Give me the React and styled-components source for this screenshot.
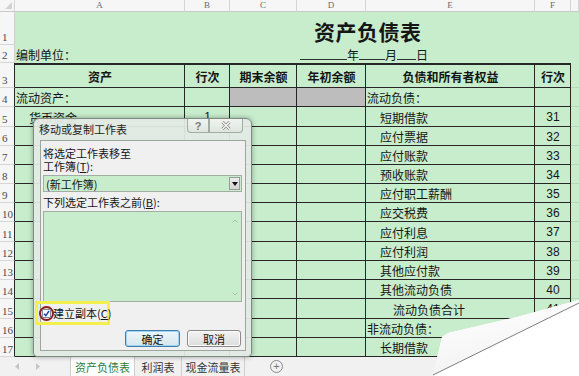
import styled, { createGlobalStyle } from 'styled-components'

const GREEN = '#c7edcc'
const LINE = '#262626'
const COLS = '15px 170px 45px 67px 69px 169px 36px 1fr'

const GlobalStyle = createGlobalStyle`
    html, body {
        margin: 0;
        padding: 0;
        background: #fff;
    }
    body {
        font-family: "Noto Sans CJK SC", "Noto Sans", sans-serif;
        color: #151515;
    }
`

const Screen = styled.div`
    position: relative;
    width: 579px;
    height: 376px;
    overflow: hidden;
    background: ${GREEN};
    display: flex;
    flex-direction: column;
`

const Row = styled.div`
    display: grid;
    grid-template-columns: ${COLS};
    height: ${p => p.$h}px;
    flex-shrink: 0;
`

const ColHead = styled.div`
    position: relative;
    background: #f6f6f6;
    border-right: 1px solid #d6d6d6;
    border-bottom: 1px solid #c9c9c9;
    color: #6a6a6a;
    font-family: "Liberation Serif", serif;
    font-size: 9px;
    display: flex;
    align-items: center;
    justify-content: center;
    line-height: 1;
`

const Corner = styled(ColHead)`
    &::after {
        content: '';
        position: absolute;
        right: 2px;
        bottom: 2px;
        border-left: 7px solid transparent;
        border-bottom: 7px solid #d2d2d2;
    }
`

const RowNum = styled.div`
    background: #f6f6f6;
    color: #4a4a4a;
    font-family: "Liberation Serif", serif;
    font-size: 11px;
    display: flex;
    align-items: flex-end;
    padding: 0 0 1px 2px;
    border-bottom: 1px solid #d6d6d6;
    border-right: 1px solid ${p => (p.$table ? LINE : '#cfcfcf')};
    line-height: 1;
`

const Plain = styled.div`
    grid-column: ${p => p.$span || 'auto'};
    display: flex;
    align-items: flex-end;
    padding: 0 0 ${p => p.$pb || 2}px ${p => p.$pl || 1}px;
    font-size: 12px;
    line-height: 1.2;
    white-space: nowrap;
`

const Title = styled.div`
    font-size: 21px;
    font-weight: 700;
    letter-spacing: 0.5px;
    line-height: 1;
`

const DateLine = styled.div`
    display: flex;
    align-items: flex-end;
    font-size: 12px;
`

const Blank = styled.span`
    display: inline-block;
    width: ${p => p.$w}px;
    height: 11px;
    border-bottom: 1px solid #333;
    margin-bottom: 2px;
`

const Cell = styled.div`
    display: flex;
    align-items: center;
    justify-content: ${p => (p.$center ? 'center' : 'flex-start')};
    padding-left: ${p => (p.$indent || 0) * 13 + 1}px;
    padding-top: 1px;
    background: ${p => (p.$shade ? '#bdbdbd' : 'transparent')};
    border-right: 1px solid ${LINE};
    border-bottom: 1px solid ${LINE};
    border-top: ${p => (p.$top ? `2px solid ${LINE}` : 'none')};
    font-size: 12px;
    font-weight: ${p => (p.$bold ? 700 : 400)};
    font-family: ${p => (p.$num ? '"Liberation Sans", sans-serif' : 'inherit')};
    white-space: nowrap;
    overflow: hidden;
`

const Outside = styled.div`
    border-bottom: 1px solid #b3dab8;
`

const TabBar = styled.div`
    height: 19px;
    background: #f1f1f1;
    display: flex;
    align-items: stretch;
    flex-shrink: 0;
`

const Nav = styled.div`
    width: 70px;
    display: flex;
    align-items: center;
    gap: 15px;
    padding-left: 15px;
    box-sizing: border-box;
`

const Tab = styled.div`
    width: ${p => p.$w}px;
    display: flex;
    align-items: center;
    justify-content: center;
    font-size: 11px;
    color: ${p => (p.$active ? '#2e7d3c' : '#333')};
    background: ${p => (p.$active ? '#fff' : 'transparent')};
    border-right: 1px solid #cdcdcd;
    border-left: ${p => (p.$active ? '1px solid #cdcdcd' : 'none')};
    box-sizing: border-box;
`

const AddSheet = styled.div`
    margin: 0 0 0 25px;
    align-self: center;
    width: 11px;
    height: 11px;
    border: 1px solid #8a8a8a;
    border-radius: 50%;
    color: #777;
    font-size: 11px;
    line-height: 10px;
    text-align: center;
    font-family: "Liberation Sans", sans-serif;
`

/* dialog */
const Dialog = styled.div`
    position: absolute;
    left: 33px;
    top: 118px;
    width: 219px;
    height: 239px;
    box-sizing: border-box;
    border: 1px solid #7d8b80;
    border-radius: 6px 6px 4px 4px;
    background: rgba(226, 234, 228, 0.94);
    box-shadow: 0 0 5px rgba(0, 0, 0, 0.35);
    display: flex;
    flex-direction: column;
    padding: 0 5px 5px 6px;
`

const TitleBar = styled.div`
    height: 21px;
    display: flex;
    align-items: flex-start;
    flex-shrink: 0;
`

const DialogTitle = styled.div`
    font-size: 11px;
    margin: 4px 0 0 -1px;
    color: #1c1c1c;
    line-height: 13px;
    white-space: nowrap;
`

const CaptionButton = styled.div`
    width: ${p => p.$w}px;
    height: 14px;
    margin-left: ${p => p.$ml || '0'};
    margin-right: ${p => p.$mr || 0}px;
    flex-shrink: 0;
    box-sizing: border-box;
    border: 1px solid #a2aca4;
    border-top: none;
    border-radius: ${p => p.$r};
    background: linear-gradient(#f1f4f1, #dde6de);
    display: flex;
    align-items: center;
    justify-content: center;
    color: #7a7a7a;
    font-family: "Liberation Sans", sans-serif;
    font-size: 11px;
    font-weight: 700;
`

const Client = styled.div`
    flex: 1;
    background: #f0f0f0;
    border: 1px solid #9ca69d;
    display: flex;
    flex-direction: column;
    padding: 4px 3px 0 2px;
    font-size: 11px;
`

const Label = styled.div`
    line-height: 12px;
    height: 12px;
    margin-top: ${p => p.$mt || 0}px;
    white-space: nowrap;
`

const Key = styled.span`
    text-decoration: underline;
`

const Combo = styled.div`
    margin-top: 3px;
    height: 17px;
    box-sizing: border-box;
    border: 1px solid #a3ada4;
    background: ${GREEN};
    display: flex;
    align-items: center;
    justify-content: space-between;
    padding: 0 1px 0 2px;
`

const DropButton = styled.div`
    width: 11px;
    height: 13px;
    background: linear-gradient(#ececec, #d3d3d3);
    border: 1px solid #9a9a9a;
    box-sizing: border-box;
    display: flex;
    align-items: center;
    justify-content: center;
`

const ListBox = styled.div`
    margin-top: 3px;
    height: 91px;
    box-sizing: border-box;
    border: 1px solid #a3ada4;
    background: ${GREEN};
    display: flex;
    justify-content: flex-end;
`

const Scroll = styled.div`
    width: 12px;
    display: flex;
    flex-direction: column;
    justify-content: space-between;
    align-items: center;
    padding: 7px 0 5px;
`

const Highlight = styled.div`
    margin: -1px 0 0 -8px;
    width: 75px;
    height: 24px;
    box-sizing: border-box;
    border: 3px solid #f3f04e;
    display: flex;
    align-items: center;
    padding-left: 1px;
`

const Ring = styled.div`
    width: 15px;
    height: 15px;
    box-sizing: border-box;
    border: 2px solid #8e1b1b;
    border-radius: 50%;
    display: flex;
    align-items: center;
    justify-content: center;
    flex-shrink: 0;
`

const Box = styled.div`
    width: 9px;
    height: 9px;
    box-sizing: border-box;
    border: 1px solid #7f8a9a;
    background: #fff;
    display: flex;
    align-items: center;
    justify-content: center;
`

const CheckText = styled.div`
    margin-left: -1px;
    font-size: 11px;
    white-space: nowrap;
`

const Buttons = styled.div`
    margin-top: 5px;
    display: flex;
    justify-content: flex-end;
    gap: 7px;
    padding-right: 1px;
`

const Button = styled.div`
    width: ${p => p.$w}px;
    height: 17px;
    box-sizing: border-box;
    border: 1px solid ${p => (p.$primary ? '#3c7fb1' : '#8a8a8a')};
    border-radius: 3px;
    background: ${p =>
        p.$primary
            ? 'linear-gradient(#eef5f9, #d6e6ef)'
            : 'linear-gradient(#f3f3f3, #dcdcdc)'};
    box-shadow: ${p => (p.$primary ? 'inset 0 0 0 1px #9fd3f0' : 'inset 0 0 0 1px #fbfbfb')};
    display: flex;
    align-items: center;
    justify-content: center;
    font-size: 11px;
`

const Curl = styled.svg`
    position: absolute;
    right: 0;
    bottom: 0;
`

const rows = [
    { n: 4, h: 19, a: '流动资产：', shade: true, e: '流动负债：' },
    { n: 5, h: 20, a: '货币资金', ai: 1, b: '1', e: '短期借款', ei: 1, f: '31' },
    { n: 6, h: 19, e: '应付票据', ei: 1, f: '32' },
    { n: 7, h: 19, e: '应付账款', ei: 1, f: '33' },
    { n: 8, h: 19, e: '预收账款', ei: 1, f: '34' },
    { n: 9, h: 19, e: '应付职工薪酬', ei: 1, f: '35' },
    { n: 10, h: 19, e: '应交税费', ei: 1, f: '36' },
    { n: 11, h: 20, e: '应付利息', ei: 1, f: '37' },
    { n: 12, h: 19, e: '应付利润', ei: 1, f: '38' },
    { n: 13, h: 19, e: '其他应付款', ei: 1, f: '39' },
    { n: 14, h: 19, e: '其他流动负债', ei: 1, f: '40' },
    { n: 15, h: 20, e: '流动负债合计', ei: 2, f: '41' },
    { n: 16, h: 19, e: '非流动负债：' },
    { n: 17, h: 19, e: '长期借款', ei: 1 },
]

const headers = ['资产', '行次', '期末余额', '年初余额', '负债和所有者权益', '行次']

const SheetRow = ({ r }) => (
    <Row $h={r.h}>
        <RowNum $table>{r.n}</RowNum>
        <Cell $indent={r.ai}>{r.a}</Cell>
        <Cell $center $num>{r.b}</Cell>
        <Cell $shade={r.shade} />
        <Cell $shade={r.shade} />
        <Cell $indent={r.ei}>{r.e}</Cell>
        <Cell $center $num>{r.f}</Cell>
        <Outside />
    </Row>
)

const App = () => {
    return (
        <>
            <GlobalStyle />
            <Screen>
                <Row $h={12}>
                    <Corner />
                    {['A', 'B', 'C', 'D', 'E', 'F', ''].map((c, i) => (
                        <ColHead key={i}>{c}</ColHead>
                    ))}
                </Row>
                <Row $h={33}>
                    <RowNum>1</RowNum>
                    <Plain $span="5 / 9" $pl={17} $pb={3}>
                        <Title>资产负债表</Title>
                    </Plain>
                </Row>
                <Row $h={18}>
                    <RowNum>2</RowNum>
                    <Plain $pb={1}>编制单位：</Plain>
                    <Plain $span="5 / 9" $pl={3} $pb={1}>
                        <DateLine>
                            <Blank $w={47} />年<Blank $w={26} />月<Blank $w={19} />日
                        </DateLine>
                    </Plain>
                </Row>
                <Row $h={25}>
                    <RowNum $table>3</RowNum>
                    {headers.map((h, i) => (
                        <Cell key={i} $center $bold $top>{h}</Cell>
                    ))}
                    <Outside />
                </Row>
                {rows.map(r => (
                    <SheetRow key={r.n} r={r} />
                ))}
                <TabBar>
                    <Nav>
                        <svg width="5" height="7" viewBox="0 0 5 7"><path d="M4 0 L0 3.5 L4 7 Z" fill="#c4c4c4" /></svg>
                        <svg width="5" height="7" viewBox="0 0 5 7"><path d="M1 0 L5 3.5 L1 7 Z" fill="#c4c4c4" /></svg>
                    </Nav>
                    <Tab $active $w={65}>资产负债表</Tab>
                    <Tab $w={47}>利润表</Tab>
                    <Tab $w={63}>现金流量表</Tab>
                    <AddSheet>+</AddSheet>
                </TabBar>

                <Dialog>
                    <TitleBar>
                        <DialogTitle>移动或复制工作表</DialogTitle>
                        <CaptionButton $w={22} $ml="auto" $r="0 0 0 4px">?</CaptionButton>
                        <CaptionButton $w={34} $mr={3} $r="0 0 4px 0">
                            <svg width="10" height="9" viewBox="0 0 10 9">
                                <path d="M1.5 1 L8.5 8 M8.5 1 L1.5 8" stroke="#8c8c8c" strokeWidth="3" />
                                <path d="M1.5 1 L8.5 8 M8.5 1 L1.5 8" stroke="#fafafa" strokeWidth="1.3" />
                            </svg>
                        </CaptionButton>
                    </TitleBar>
                    <Client>
                        <Label $mt={2}>将选定工作表移至</Label>
                        <Label $mt={1}>工作簿(<Key>T</Key>):</Label>
                        <Combo>
                            <span>(新工作簿)</span>
                            <DropButton>
                                <svg width="6" height="4" viewBox="0 0 6 4"><path d="M0 0 H6 L3 4 Z" fill="#111" /></svg>
                            </DropButton>
                        </Combo>
                        <Label $mt={4}>下列选定工作表之前(<Key>B</Key>):</Label>
                        <ListBox>
                            <Scroll>
                                <svg width="6" height="4" viewBox="0 0 6 4"><path d="M0.5 3.5 L3 1 L5.5 3.5" stroke="#b5b5b5" fill="none" /></svg>
                                <svg width="6" height="4" viewBox="0 0 6 4"><path d="M0.5 0.5 L3 3 L5.5 0.5" stroke="#b5b5b5" fill="none" /></svg>
                            </Scroll>
                        </ListBox>
                        <Highlight>
                            <Ring>
                                <Box>
                                    <svg width="7" height="7" viewBox="0 0 7 7"><path d="M1 3.8 L2.8 5.6 L6 1" stroke="#1f3f9a" strokeWidth="1.4" fill="none" /></svg>
                                </Box>
                            </Ring>
                            <CheckText>建立副本(<Key>C</Key>)</CheckText>
                        </Highlight>
                        <Buttons>
                            <Button $primary $w={55}>确定</Button>
                            <Button $w={54}>取消</Button>
                        </Buttons>
                    </Client>
                </Dialog>

                <Curl width="150" height="80" viewBox="0 0 150 80">
                    <defs>
                        <linearGradient id="flap" x1="0" y1="0" x2="0.3" y2="1">
                            <stop offset="0" stopColor="#ffffff" />
                            <stop offset="1" stopColor="#f3f3f3" />
                        </linearGradient>
                    </defs>
                    <polygon points="150,4 88,21 19,37 13,41 4,80 150,80" fill="#fff" />
                    <polygon points="150,4 88,21 19,37 13,41 4,79 150,7" fill="url(#flap)" />
                    <line x1="150" y1="7" x2="4" y2="79" stroke="#6f6f6f" strokeWidth="0.9" />
                </Curl>
            </Screen>
        </>
    )
}

export default App
